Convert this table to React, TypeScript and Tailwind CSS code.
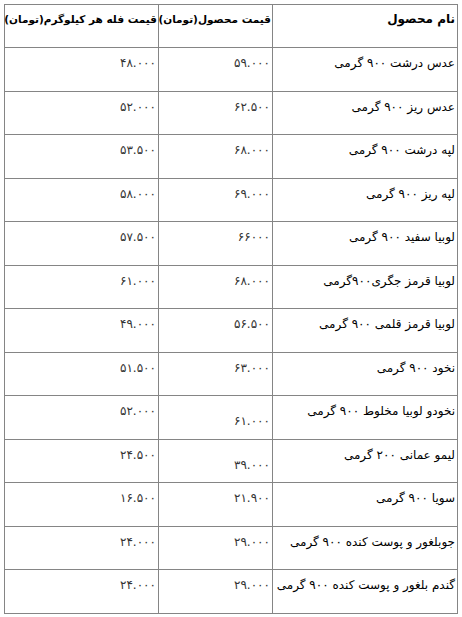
import React from "react";

type Row = { name: string; price: string; bulk: string; low?: boolean };

const rows: Row[] = [
  { name: "عدس درشت ۹۰۰ گرمی", price: "۵۹.۰۰۰", bulk: "۴۸.۰۰۰" },
  { name: "عدس ریز ۹۰۰ گرمی", price: "۶۲.۵۰۰", bulk: "۵۲.۰۰۰" },
  { name: "لپه درشت ۹۰۰ گرمی", price: "۶۸.۰۰۰", bulk: "۵۳.۵۰۰" },
  { name: "لپه ریز ۹۰۰ گرمی", price: "۶۹.۰۰۰", bulk: "۵۸.۰۰۰" },
  { name: "لوبیا سفید ۹۰۰ گرمی", price: "۶۶۰۰۰", bulk: "۵۷.۵۰۰" },
  { name: "لوبیا قرمز جگری۹۰۰گرمی", price: "۶۸.۰۰۰", bulk: "۶۱.۰۰۰" },
  { name: "لوبیا قرمز قلمی ۹۰۰ گرمی", price: "۵۶.۵۰۰", bulk: "۴۹.۰۰۰" },
  { name: "نخود ۹۰۰ گرمی", price: "۶۳.۰۰۰", bulk: "۵۱.۵۰۰" },
  { name: "نخودو لوبیا مخلوط ۹۰۰ گرمی", price: "۶۱.۰۰۰", bulk: "۵۲.۰۰۰", low: true },
  { name: "لیمو عمانی ۲۰۰ گرمی", price: "۳۹.۰۰۰", bulk: "۲۴.۵۰۰", low: true },
  { name: "سویا ۹۰۰ گرمی", price: "۲۱.۹۰۰", bulk: "۱۶.۵۰۰" },
  { name: "جوبلغور و پوست کنده ۹۰۰ گرمی", price: "۲۹.۰۰۰", bulk: "۲۴.۰۰۰" },
  { name: "گندم بلغور و پوست کنده ۹۰۰ گرمی", price: "۲۹.۰۰۰", bulk: "۲۴.۰۰۰" },
];

export default function App() {
  return (
    <div className="w-[462px] h-[617px] bg-white pl-[4px] pt-[4px] font-['DejaVu_Sans',_Tahoma,_sans-serif] text-[12px] text-black">
      <table dir="rtl" className="w-[453px] border-collapse border border-[#858585] table-fixed">
        <colgroup>
          <col className="w-[185px]" />
          <col className="w-[114px]" />
          <col className="w-[154px]" />
        </colgroup>
        <thead>
          <tr className="h-[43px]">
            <th className="border border-[#858585] px-[2px] pt-[6px] text-right align-top font-bold text-[12px] leading-[16px] whitespace-nowrap">نام محصول</th>
            <th className="border border-[#858585] px-[1px] pt-[6px] text-right align-top font-bold text-[10.5px] leading-[16px] whitespace-nowrap">قیمت محصول(تومان)</th>
            <th className="border border-[#858585] px-[1px] pt-[6px] text-right align-top font-bold text-[10.5px] leading-[16px] whitespace-nowrap">قیمت فله هر کیلوگرم(تومان)</th>
          </tr>
        </thead>
        <tbody>
          {rows.map((r, i) => (
            <tr key={i} className="h-[43.5px]">
              <td className="border border-[#858585] px-[2px] pt-[7px] align-top text-right leading-[16px] whitespace-nowrap">{r.name}</td>
              <td className={r.low ? "border border-[#858585] px-[2px] pt-[17px] align-top text-right leading-[16px] text-[#333]" : "border border-[#858585] px-[2px] pt-[7px] align-top text-right leading-[16px] text-[#333]"}>{r.price}</td>
              <td className="border border-[#858585] px-[2px] pt-[7px] align-top text-right leading-[16px] text-[#333]">{r.bulk}</td>
            </tr>
          ))}
        </tbody>
      </table>
    </div>
  );
}
